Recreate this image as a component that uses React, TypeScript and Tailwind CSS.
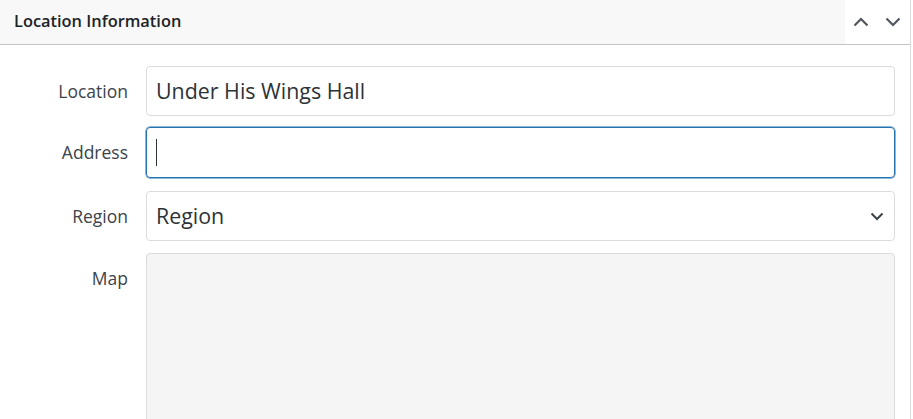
import React from 'react'

const font = { fontFamily: '"Open Sans", "Noto Sans", sans-serif' }

function Chevron({ up = false, className = '' }: { up?: boolean; className?: string }) {
    return (
        <svg width="16" height="10" viewBox="0 0 16 10" className={className} fill="none">
            <path
                d={up ? 'M1.5 8.5 L8 2 L14.5 8.5' : 'M1.5 1.5 L8 8 L14.5 1.5'}
                stroke="currentColor"
                strokeWidth="2.2"
            />
        </svg>
    )
}

function Row({ label, className = '', children }: { label: string; className?: string; children: React.ReactNode }) {
    return (
        <div className={`flex items-start gap-[18px] ${className}`}>
            <div className="w-[128px] h-[50px] flex items-center justify-end text-[17.5px] text-[#3c434a] shrink-0">
                {label}
            </div>
            <div className="flex-1">{children}</div>
        </div>
    )
}

export default function App() {
    return (
        <div className="w-[913px] h-[419px] bg-white overflow-hidden" style={font}>
            <div className="w-[911px] h-full border-r border-[#dcdcde]">
                {/* Header */}
                <div className="flex h-[45px] border-b border-[#c3c4c7]">
                    <div className="flex-1 bg-[#f8f8f8] flex items-center pl-[14px] pb-[1px]">
                        <h2 className="text-[16.4px] font-semibold text-[#1d2327]">Location Information</h2>
                    </div>
                    <div className="w-[65px] flex items-center gap-[16px] pl-[8px] text-[#50575e]">
                        <Chevron up />
                        <Chevron />
                    </div>
                </div>

                {/* Fields */}
                <div className="flex flex-col pt-[21px] pr-[15px]">
                    <Row label="Location">
                        <div className="h-[50px] border border-[#dcdcde] rounded-[4px] flex items-center px-[9px] text-[21.4px] text-[#2c3338]">
                            Under His Wings Hall
                        </div>
                    </Row>
                    <Row label="Address" className="mt-[11px]">
                        <div className="h-[51px] border border-[#2271b1] shadow-[0_0_0_0.5px_#2271b1] rounded-[4px] flex items-center px-[9px]">
                            <span className="w-px h-[27px] bg-[#2c3338]" />
                        </div>
                    </Row>
                    <Row label="Region" className="mt-[13px]">
                        <div className="h-[50px] border border-[#dcdcde] rounded-[4px] flex items-center justify-between pl-[9px] pr-[10px] text-[21.4px] text-[#2c3338]">
                            <span>Region</span>
                            <svg width="14" height="9" viewBox="0 0 14 9" fill="none" className="text-[#3c434a]">
                                <path d="M1.5 1.5 L7 7 L12.5 1.5" stroke="currentColor" strokeWidth="2" />
                            </svg>
                        </div>
                    </Row>
                    <Row label="Map" className="mt-[12px]">
                        <div className="h-[200px] border border-[#dcdcde] rounded-[4px] bg-[#f5f5f5]" />
                    </Row>
                </div>
            </div>
        </div>
    )
}
